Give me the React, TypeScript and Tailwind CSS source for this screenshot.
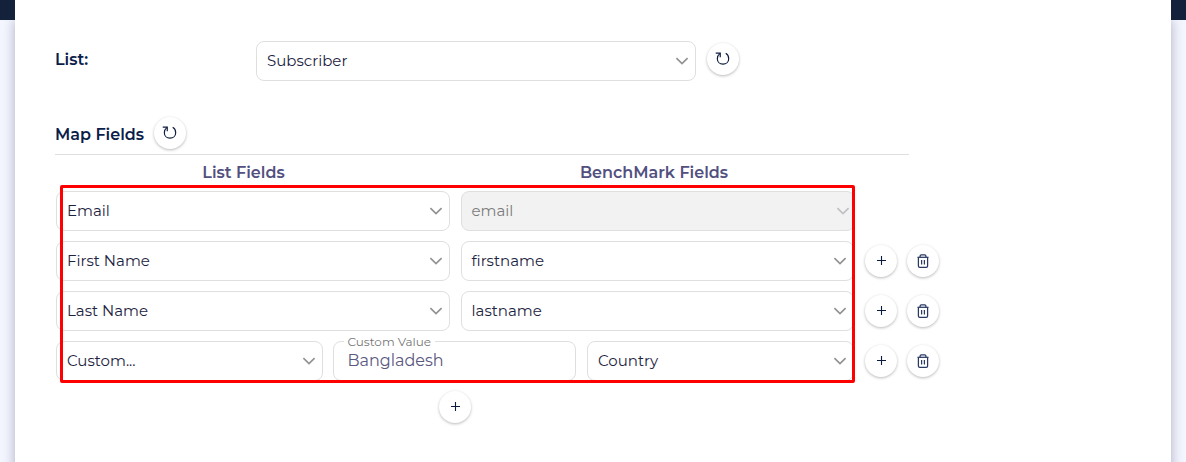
import type { ReactNode } from 'react';

function Chevron({ className = '' }: { className?: string }) {
  return (
    <svg className={`h-2 w-3.5 shrink-0 ${className}`} viewBox="0 0 14 8" fill="none" stroke="currentColor" strokeWidth="1.7">
      <path d="M1.4 1.2 L7 6.5 L12.6 1.2" />
    </svg>
  );
}

function Select({ label, className, disabled = false }: { label: string; className: string; disabled?: boolean }) {
  return (
    <div
      className={`flex h-10 shrink-0 items-center justify-between rounded-lg border border-[#dfdfdf] ${
        disabled ? 'bg-[#f2f2f2] pr-1 text-[#7b7b7b]' : 'bg-white pr-1.5 text-[#1c2340]'
      } ${className}`}
    >
      <span className="text-[15px] leading-5 font-normal">{label}</span>
      <Chevron className={disabled ? 'text-[#bfc0c4]' : 'text-[#929292]'} />
    </div>
  );
}

function RoundButton({ children, label, className = '' }: { children: ReactNode; label: string; className?: string }) {
  return (
    <button
      aria-label={label}
      className={`flex size-8 shrink-0 items-center justify-center rounded-full bg-white text-[#0c1b3d] shadow-[0_1px_3px_rgba(0,0,0,0.28)] ${className}`}
    >
      {children}
    </button>
  );
}

function RefreshIcon() {
  return (
    <svg className="-mt-px -ml-px size-[15px]" viewBox="0 0 16 16" fill="none" stroke="currentColor" strokeWidth="1.25">
      <path d="M0.8 2.2 H5.6 V6.6" />
      <path d="M5.4 2.5 C3.2 4.2 2.5 6 2.5 8.2 C2.5 11.8 5.1 14 8.5 14 C12 14 14.6 11.7 14.6 8.2 C14.6 5.8 13.6 3.7 11.4 2.5" />
    </svg>
  );
}

function PlusIcon() {
  return (
    <svg className="-mt-px size-[9px]" viewBox="0 0 9 9" fill="none" stroke="currentColor" strokeWidth="1.1">
      <path d="M4.5 0 V9 M0 4.5 H9" />
    </svg>
  );
}

function TrashIcon() {
  return (
    <svg className="h-[14px] w-3" viewBox="0 0 12 14" fill="none" stroke="#2a3963" strokeWidth="1.25">
      <path d="M0.5 3.3 H11.5" />
      <path d="M3.1 3.2 V2 Q3.1 0.8 4.3 0.8 H7.7 Q8.9 0.8 8.9 2 V3.2" />
      <path d="M1.4 3.4 V11.9 Q1.4 13.3 2.8 13.3 H9.2 Q10.6 13.3 10.6 11.9 V3.4" />
      <path d="M4.6 6 V10.5 M7.4 6 V10.5" />
    </svg>
  );
}

function RowActions() {
  return (
    <div className="ml-2.5 flex items-center gap-2.5">
      <RoundButton label="Add field"><PlusIcon /></RoundButton>
      <RoundButton label="Delete field"><TrashIcon /></RoundButton>
    </div>
  );
}

export default function App() {
  return (
    <div className="relative h-[462px] w-[1186px] overflow-hidden bg-[#f4f7ff] font-['Montserrat','Inter',sans-serif]">
      <div className="h-5 bg-[#14213b]" />
      <main className="relative mx-[15px] -mt-5 h-[462px] bg-white pl-10">
        <div className="pointer-events-none absolute inset-x-0 top-5 h-[500px] shadow-[0_0_12px_rgba(40,30,80,0.35)] [clip-path:inset(0_-15px_0_-15px)]" />
        <div className="flex h-[81px] items-end">
          <div className="w-[201px] pb-[11px] text-base leading-5 font-semibold text-[#0b1d49]">List:</div>
          <Select label="Subscriber" className="w-[440px] pl-2.5" />
          <RoundButton label="Refresh lists" className="mb-1.5 ml-[11px]"><RefreshIcon /></RoundButton>
        </div>

        <div className="mt-9 flex h-[38px] w-[854px] items-start border-b border-[#dfdfdf]">
          <h2 className="w-[89px] pt-2 text-base leading-5 font-semibold whitespace-nowrap text-[#0b1d49]">Map Fields</h2>
          <RoundButton label="Refresh fields" className="ml-2.5"><RefreshIcon /></RoundButton>
        </div>

        <div className="flex h-9 w-[800px] pt-2 text-base leading-5 font-semibold text-[#525080]">
          <div className="w-[377px] text-center">List Fields</div>
          <div className="ml-[34px] w-[376px] text-center">BenchMark Fields</div>
        </div>

        <div className="relative ml-px flex flex-col gap-2.5">
          <div className="flex items-center">
            <Select label="Email" className="w-[394px] pl-2.5" />
            <Select label="email" className="ml-[11px] w-[394px] pl-[9.5px]" disabled />
          </div>
          <div className="flex items-center">
            <Select label="First Name" className="w-[394px] pl-2.5" />
            <Select label="firstname" className="ml-[11px] w-[393px] pl-[9.5px]" />
            <div className="w-px" />
            <RowActions />
          </div>
          <div className="flex items-center">
            <Select label="Last Name" className="w-[394px] pl-2.5" />
            <Select label="lastname" className="ml-[11px] w-[393px] pl-[9.5px]" />
            <div className="w-px" />
            <RowActions />
          </div>
          <div className="flex items-center">
            <Select label="Custom..." className="w-[267px] pl-2.5" />
            <div className="relative ml-2.5 flex h-10 w-[243px] items-center rounded-lg border border-[#dfdfdf] pl-[13.5px]">
              <span className="absolute -top-2 left-[9.5px] bg-white px-1 text-xs leading-4 font-normal text-[#777777]">Custom Value</span>
              <span className="text-base leading-5 font-normal text-[#5a5880]">Bangladesh</span>
            </div>
            <Select label="Country" className="ml-[11px] w-[267px] pl-2.5" />
            <div className="w-px" />
            <RowActions />
          </div>
          <div className="pointer-events-none absolute -top-1.5 left-1 h-[198px] w-[795px] rounded-[2px] border-3 border-[#ff0000]" />
        </div>

        <div className="mt-2.5 flex w-[800px] justify-center">
          <RoundButton label="Add mapping"><PlusIcon /></RoundButton>
        </div>
      </main>
    </div>
  );
}
